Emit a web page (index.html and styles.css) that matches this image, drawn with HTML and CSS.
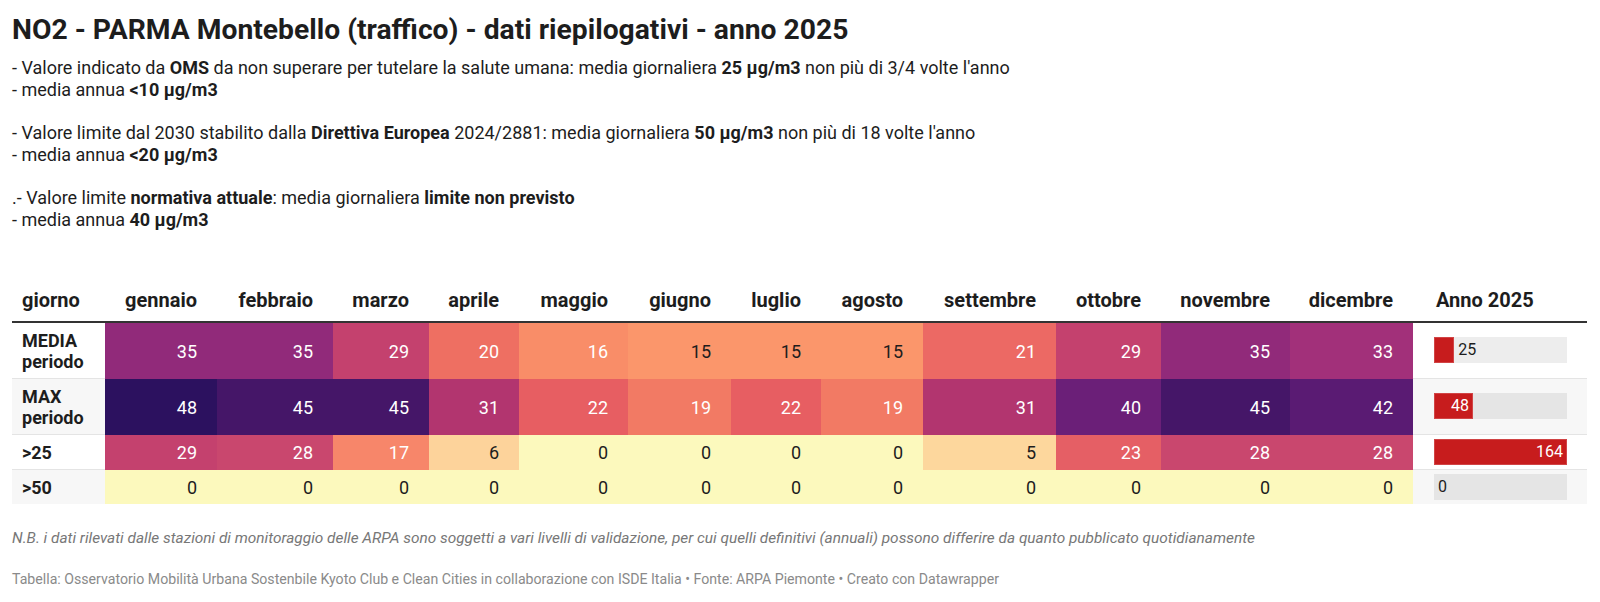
FILE: index.html
```html
<!DOCTYPE html>
<html lang="it">
<head>
<meta charset="utf-8">
<title>NO2 - PARMA Montebello</title>
<link rel="stylesheet" href="styles.css">
</head>
<body>
<div class="chart">
  <h1 class="title">NO2 - PARMA Montebello (traffico) - dati riepilogativi - anno 2025</h1>
  <div class="desc">
    <p>- Valore indicato da <b>OMS</b> da non superare per tutelare la salute umana: media giornaliera <b>25 µg/m3</b> non più di 3/4 volte l'anno<br>- media annua <b>&lt;10 µg/m3</b></p>
    <p>- Valore limite dal 2030 stabilito dalla <b>Direttiva Europea</b> 2024/2881: media giornaliera <b>50 µg/m3</b> non più di 18 volte l'anno<br>- media annua <b>&lt;20 µg/m3</b></p>
    <p>.- Valore limite <b>normativa attuale</b>: media giornaliera <b>limite non previsto</b><br>- media annua <b>40 µg/m3</b></p>
  </div>
  <table class="tbl">
    <colgroup>
      <col class="w-giorno"><col class="w-gen"><col class="w-feb"><col class="w-mar"><col class="w-apr"><col class="w-mag"><col class="w-giu"><col class="w-lug"><col class="w-ago"><col class="w-set"><col class="w-ott"><col class="w-nov"><col class="w-dic"><col class="w-anno">
    </colgroup>
    <thead>
      <tr>
        <th class="h-left">giorno</th>
        <th>gennaio</th><th>febbraio</th><th>marzo</th><th>aprile</th><th>maggio</th><th>giugno</th><th>luglio</th><th>agosto</th><th>settembre</th><th>ottobre</th><th>novembre</th><th>dicembre</th>
        <th class="h-anno">Anno 2025</th>
      </tr>
    </thead>
    <tbody>
      <tr class="r-white">
        <td class="lbl">MEDIA<br>periodo</td>
        <td class="v35">35</td><td class="v35">35</td><td class="v29">29</td><td class="v20">20</td><td class="v16">16</td><td class="v15">15</td><td class="v15">15</td><td class="v15">15</td><td class="v21">21</td><td class="v29">29</td><td class="v35">35</td><td class="v33">33</td>
        <td class="bar"><div class="track"><div class="fill" style="width:15.2%"></div><span class="out">25</span></div></td>
      </tr>
      <tr class="r-grey">
        <td class="lbl">MAX<br>periodo</td>
        <td class="v48">48</td><td class="v45">45</td><td class="v45">45</td><td class="v31">31</td><td class="v22">22</td><td class="v19">19</td><td class="v22">22</td><td class="v19">19</td><td class="v31">31</td><td class="v40">40</td><td class="v45">45</td><td class="v42">42</td>
        <td class="bar"><div class="track"><div class="fill" style="width:29.3%"><span class="in">48</span></div></div></td>
      </tr>
      <tr class="r-white">
        <td class="lbl">&gt;25</td>
        <td class="v29">29</td><td class="v28">28</td><td class="v17">17</td><td class="v6">6</td><td class="v0">0</td><td class="v0">0</td><td class="v0">0</td><td class="v0">0</td><td class="v5">5</td><td class="v23">23</td><td class="v28">28</td><td class="v28">28</td>
        <td class="bar"><div class="track"><div class="fill" style="width:100%"><span class="in">164</span></div></div></td>
      </tr>
      <tr class="r-grey last">
        <td class="lbl">&gt;50</td>
        <td class="v0">0</td><td class="v0">0</td><td class="v0">0</td><td class="v0">0</td><td class="v0">0</td><td class="v0">0</td><td class="v0">0</td><td class="v0">0</td><td class="v0">0</td><td class="v0">0</td><td class="v0">0</td><td class="v0">0</td>
        <td class="bar"><div class="track"><div class="fill" style="width:0%"></div><span class="out zero">0</span></div></td>
      </tr>
    </tbody>
  </table>
  <p class="notes">N.B. i dati rilevati dalle stazioni di monitoraggio delle ARPA sono soggetti a vari livelli di validazione, per cui quelli definitivi (annuali) possono differire da quanto pubblicato quotidianamente</p>
  <p class="footer">Tabella: Osservatorio Mobilità Urbana Sostenbile Kyoto Club e Clean Cities in collaborazione con ISDE Italia • Fonte: ARPA Piemonte • Creato con Datawrapper</p>
</div>
</body>
</html>
```

FILE: styles.css
```css
html, body {
  margin: 0;
  padding: 0;
  background: #ffffff;
}

body {
  font-family: Roboto, "Noto Sans", "Liberation Sans", sans-serif;
  color: #1d1d1d;
}

.chart {
  padding: 13px 13px 0 12px;
}

.title {
  margin: 0 0 10px 0;
  font-size: 28.25px;
  line-height: 34px;
  font-weight: 700;
  color: #1d1d1d;
}

.desc p {
  margin: 0 0 21.7px 0;
  font-size: 18px;
  line-height: 21.7px;
  color: #1d1d1d;
}

.desc p:last-child {
  margin-bottom: 0;
}

.desc b {
  font-weight: 700;
}

.tbl {
  margin-top: 49px;
  width: 1575px;
  border-collapse: separate;
  border-spacing: 0;
  table-layout: fixed;
}

.w-giorno { width: 93px; }
.w-gen { width: 112px; }
.w-feb { width: 116px; }
.w-mar { width: 96px; }
.w-apr { width: 90px; }
.w-mag { width: 109px; }
.w-giu { width: 103px; }
.w-lug { width: 90px; }
.w-ago { width: 102px; }
.w-set { width: 133px; }
.w-ott { width: 105px; }
.w-nov { width: 129px; }
.w-dic { width: 123px; }
.w-anno { width: 174px; }

.tbl th {
  font-size: 20px;
  line-height: 24px;
  font-weight: 700;
  color: #1d1d1d;
  text-align: right;
  padding: 8px 20px 9px 10px;
  border-bottom: 2px solid #333333;
  white-space: nowrap;
}

.tbl th.h-left {
  text-align: left;
  padding-left: 10px;
}

.tbl th.h-anno {
  text-align: left;
  padding-left: 23px;
}

.tbl td {
  font-size: 18px;
  line-height: 21px;
  padding: 7px 20px 6px 10px;
  text-align: right;
  color: #ffffff;
  vertical-align: middle;
}

.tbl td.lbl {
  text-align: left;
  font-weight: 700;
  color: #1d1d1d;
  padding-left: 10px;
  border-bottom: 1px solid #e4e4e4;
}

.tbl td.bar {
  padding: 3px 20px 3px 21px;
  border-bottom: 1px solid #e4e4e4;
}

.tbl tr.last td.lbl,
.tbl tr.last td.bar {
  border-bottom: none;
}

.r-white td.lbl,
.r-white td.bar {
  background: #ffffff;
}

.r-grey td.lbl,
.r-grey td.bar {
  background: #f7f7f7;
}

.track {
  display: flex;
  align-items: center;
  height: 26px;
  background: rgba(0, 0, 0, 0.07);
}

.fill {
  height: 100%;
  background: #c71c1d;
  box-shadow: inset 0 0 0 1px rgba(255, 255, 255, 0.18);
  display: flex;
  align-items: center;
  justify-content: flex-end;
  box-sizing: border-box;
}

.track .in {
  font-size: 16px;
  line-height: 20px;
  color: #ffffff;
  padding-right: 4px;
}

.track .out {
  font-size: 16px;
  line-height: 20px;
  color: #1d1d1d;
  padding-left: 4px;
}

/* heatmap colours */
.v48 { background: #2c115f; }
.v45 { background: #451668; }
.v42 { background: #5a1b73; }
.v40 { background: #6b1f78; }
.v35 { background: #912a7a; }
.v33 { background: #a2307a; }
.v31 { background: #b2356f; }
.v29 { background: #c4416e; }
.v28 { background: #c9476e; }
.v23 { background: #e55f65; }
.v22 { background: #e75e62; }
.v21 { background: #ec6964; }
.v20 { background: #ee6f62; }
.v19 { background: #f27a64; }
.v17 { background: #f7866a; }
.v16 { background: #f98d68; }
.tbl td.v15 { background: #fb966b; color: #1d1d1d; }
.tbl td.v6 { background: #fdd39b; color: #1d1d1d; }
.tbl td.v5 { background: #fdd79d; color: #1d1d1d; }
.tbl td.v0 { background: #fcf9bd; color: #1d1d1d; }

.notes {
  margin: 24px 0 0 0;
  font-size: 15.4px;
  line-height: 20px;
  font-style: italic;
  color: #777777;
}

.footer {
  margin: 22px 0 0 0;
  font-size: 14.15px;
  line-height: 18px;
  color: #8a8a8a;
}
```
